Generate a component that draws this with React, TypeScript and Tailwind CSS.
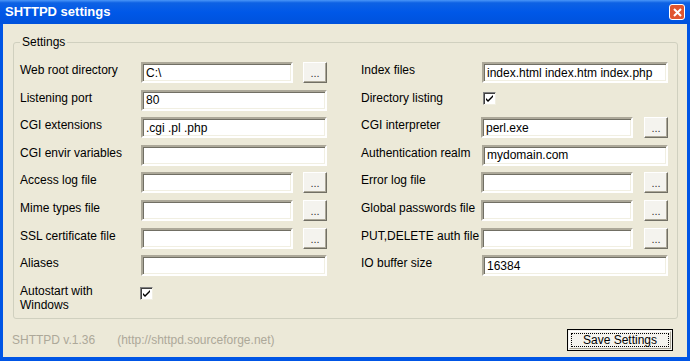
import React from "react";

const font = { fontFamily: '"Liberation Sans", Arial, sans-serif' };

function Field({ value = "", wide = false }: { value?: string; wide?: boolean }) {
  return (
    <input
      readOnly
      value={value}
      className={`${wide ? "w-[186px]" : "w-[152px]"} h-[21px] bg-white text-[12px] text-black pl-[3px] outline-none border-2 border-t-[#aca899] border-l-[#aca899] border-r-white border-b-white shadow-[inset_1px_1px_0_#716f64,inset_-1px_-1px_0_#f1efe2]`}
      style={font}
    />
  );
}

function Browse() {
  return (
    <button className="w-[24px] h-[21px] bg-[#f4f3ee] border border-t-white border-l-white border-r-[#716f64] border-b-[#716f64] shadow-[inset_-1px_-1px_0_#aca899] flex items-end justify-center pb-[3px] text-[11px] leading-none text-[#333]">
      ...
    </button>
  );
}

function Check() {
  return (
    <div className="w-[13px] h-[13px] bg-white border border-t-[#808080] border-l-[#808080] border-r-[#f1efe2] border-b-[#f1efe2] shadow-[inset_1px_1px_0_#404040] flex items-center justify-center">
      <svg width="9" height="9" viewBox="0 0 9 9">
        <path d="M1 4 L3 6 L8 1 L8 3 L3 8 L1 6 Z" fill="#000" />
      </svg>
    </div>
  );
}

function Row({ label, children }: { label: string; children: React.ReactNode }) {
  return (
    <div className="flex items-start h-[21px]">
      <div className="w-[121px] pt-[1px] text-[12px] leading-[15px] text-black whitespace-nowrap">{label}</div>
      {children}
    </div>
  );
}

export default function App() {
  return (
    <div className="w-[690px] h-[361px] bg-[#0055e5] flex flex-col" style={font}>
      {/* title bar */}
      <div className="h-[24px] flex items-center justify-between pl-[5px] pr-[5px] bg-[linear-gradient(to_bottom,#4a96f8_0%,#0e62e4_12%,#0058e8_50%,#0052dc_100%)]">
        <span className="text-white font-bold text-[13px]">SHTTPD settings</span>
        <div className="w-[16px] h-[16px] rounded-[3px] border border-white bg-[#e0552f] flex items-center justify-center">
          <svg width="9" height="9" viewBox="0 0 9 9">
            <path d="M1 1 L8 8 M8 1 L1 8" stroke="#fff" strokeWidth="2" />
          </svg>
        </div>
      </div>

      {/* client */}
      <div className="mx-[3px] mb-[4px] flex-1 bg-[#ece9d8] flex flex-col">
        <div className="relative mt-[18px] ml-[10px] w-[665px] h-[277px] border border-[#d0d0bf] rounded-[3px] pl-[6px] pr-[8px] pt-[19px]">
          <span className="absolute left-[6px] -top-[8px] px-[2px] bg-[#ece9d8] text-[12px] leading-[15px] text-black">
            Settings
          </span>
          <div className="flex gap-[34px]">
            <div className="w-[307px] flex flex-col gap-[6.6px]">
              <Row label="Web root directory">
                <Field value="C:\" />
                <div className="ml-[10px]"><Browse /></div>
              </Row>
              <Row label="Listening port"><Field value="80" wide /></Row>
              <Row label="CGI extensions"><Field value=".cgi .pl .php" wide /></Row>
              <Row label="CGI envir variables"><Field wide /></Row>
              <Row label="Access log file">
                <Field />
                <div className="ml-[10px]"><Browse /></div>
              </Row>
              <Row label="Mime types file">
                <Field />
                <div className="ml-[10px]"><Browse /></div>
              </Row>
              <Row label="SSL certificate file">
                <Field />
                <div className="ml-[10px]"><Browse /></div>
              </Row>
              <Row label="Aliases"><Field wide /></Row>
              <div className="flex items-start mt-[1px]">
                <div className="w-[120px] text-[12px] leading-[14px] text-black">
                  Autostart with
                  <br />
                  Windows
                </div>
                <div className="mt-[3px]"><Check /></div>
              </div>
            </div>

            <div className="w-[307px] flex flex-col gap-[6.6px]">
              <Row label="Index files"><Field value="index.html index.htm index.php" wide /></Row>
              <Row label="Directory listing">
                <div className="mt-[2px] ml-[1px]"><Check /></div>
              </Row>
              <Row label="CGI interpreter">
                <Field value="perl.exe" />
                <div className="ml-[11px]"><Browse /></div>
              </Row>
              <Row label="Authentication realm"><Field value="mydomain.com" wide /></Row>
              <Row label="Error log file">
                <Field />
                <div className="ml-[11px]"><Browse /></div>
              </Row>
              <Row label="Global passwords file">
                <Field />
                <div className="ml-[11px]"><Browse /></div>
              </Row>
              <Row label="PUT,DELETE auth file">
                <Field />
                <div className="ml-[11px]"><Browse /></div>
              </Row>
              <Row label="IO buffer size"><Field value="16384" wide /></Row>
            </div>
          </div>
        </div>

        {/* footer */}
        <div className="flex items-center mt-[10px] pl-[9px] pr-[14px]">
          <span className="text-[12px] text-[#aca899]">SHTTPD v.1.36</span>
          <span className="ml-[22px] text-[12px] text-[#aca899]">(http://shttpd.sourceforge.net)</span>
          <button className="ml-auto w-[106px] h-[22px] border border-black bg-[#f4f3ee] p-[1px]">
            <div className="w-full h-full border border-t-white border-l-white border-r-[#aca899] border-b-[#aca899] p-[1px]">
              <div className="w-full h-full border border-dotted border-black flex items-center justify-center text-[12px] text-black leading-none">
                Save Settings
              </div>
            </div>
          </button>
        </div>
      </div>
    </div>
  );
}
